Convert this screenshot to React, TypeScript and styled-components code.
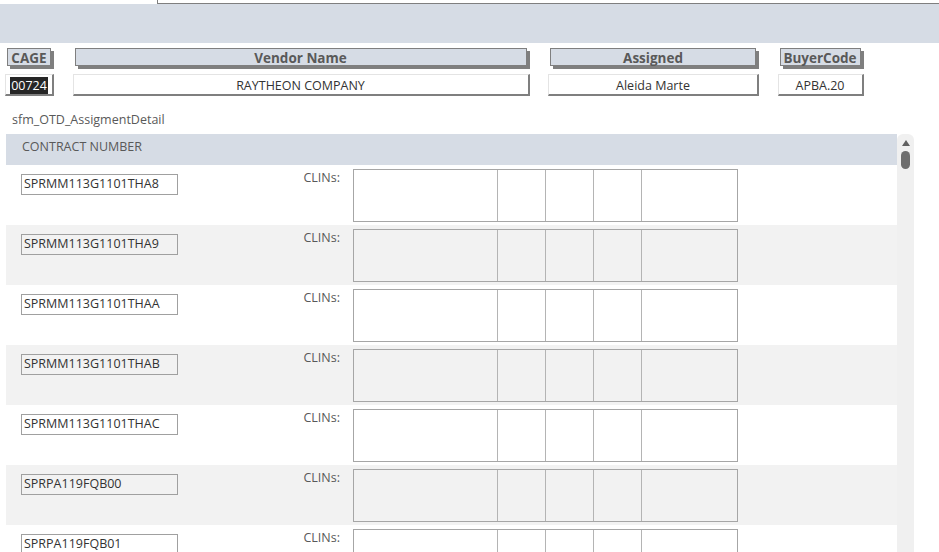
import styled, { createGlobalStyle } from 'styled-components';

const GlobalStyle = createGlobalStyle`
  html, body {
    margin: 0;
    padding: 0;
    background: #ffffff;
    overflow: hidden;
  }
  body {
    font-family: "Open Sans", "Liberation Sans", sans-serif;
  }
  * {
    box-sizing: border-box;
  }
`;

const Page = styled.div`
  width: 939px;
  height: 552px;
  overflow: hidden;
  background: #ffffff;
`;

const TabStrip = styled.div`
  height: 4px;
  padding-left: 157px;
`;

const TabEdge = styled.div`
  height: 4px;
  border-left: 1px solid #7f7f7f;
  border-bottom: 1px solid #7f7f7f;
`;

const Band = styled.div`
  height: 39px;
  background: #d6dce5;
`;

const HeaderGrid = styled.div`
  display: grid;
  grid-template-columns: 49px 457px 211px 86px;
  column-gap: 18.5px;
  row-gap: 8px;
  margin: 5px 0 0 5px;
`;

const FieldLabel = styled.div`
  height: 18px;
  margin: 0 3px 0 2px;
  background: #d6dce5;
  border: 1px solid #7f7f7f;
  box-shadow: 3px 3px 0 #7f7f7f;
  color: #595959;
  font-size: 13.5px;
  font-weight: 700;
  line-height: 18px;
  text-align: center;
  white-space: nowrap;
`;

const FieldValue = styled.div`
  height: 22px;
  background: #ffffff;
  border-top: 1px solid #e4e4e4;
  border-left: 1px solid #e4e4e4;
  border-right: 2px solid #7f7f7f;
  border-bottom: 2px solid #7f7f7f;
  color: #333333;
  font-size: 12.5px;
  line-height: 21px;
  text-align: center;
  white-space: nowrap;
`;

const Selected = styled.span`
  background: #262626;
  color: #ffffff;
  padding: 0 1px;
`;

const FormTitle = styled.div`
  margin: 16px 0 0 12px;
  height: 22px;
  color: #595959;
  font-size: 12.5px;
  line-height: 16px;
`;

const SubForm = styled.div`
  display: flex;
  margin-left: 6px;
  width: 908px;
  height: 420px;
  overflow: hidden;
`;

const List = styled.div`
  width: 891px;
`;

const ListHeader = styled.div`
  height: 31px;
  background: #d6dce5;
  padding-left: 16px;
  color: #595959;
  font-size: 12.5px;
  line-height: 25px;
`;

const Row = styled.div<{ $alt: boolean }>`
  display: flex;
  align-items: flex-start;
  height: 60px;
  background: ${(p) => (p.$alt ? '#f2f2f2' : '#ffffff')};
`;

const ContractBox = styled.div`
  width: 157px;
  height: 21px;
  margin: 9px 0 0 15px;
  padding-left: 2px;
  border: 1px solid #a0a0a0;
  color: #333333;
  font-size: 12.5px;
  line-height: 18px;
  white-space: nowrap;
`;

const ClinLabel = styled.div`
  width: 162px;
  margin: 5px 13px 0 0;
  text-align: right;
  color: #595959;
  font-size: 12.5px;
  line-height: 16px;
`;

const ClinGrid = styled.div`
  display: grid;
  grid-template-columns: 143px 48px 48px 48px 1fr;
  width: 385px;
  height: 53px;
  margin-top: 4px;
  border: 1px solid #a6a6a6;
`;

const ClinCell = styled.div`
  & + & {
    border-left: 1px solid #b4b4b4;
  }
`;

const ScrollBar = styled.div`
  width: 17px;
  background: #f0f0f0;
  border-radius: 6px 6px 0 0;
  display: flex;
  flex-direction: column;
  align-items: center;
  padding-top: 6px;
`;

const UpArrow = styled.div`
  width: 0;
  height: 0;
  border-left: 4px solid transparent;
  border-right: 4px solid transparent;
  border-bottom: 6px solid #606060;
`;

const Thumb = styled.div`
  width: 9px;
  height: 18px;
  margin-top: 5px;
  border-radius: 5px;
  background: #6e6e6e;
`;

const contracts = [
  'SPRMM113G1101THA8',
  'SPRMM113G1101THA9',
  'SPRMM113G1101THAA',
  'SPRMM113G1101THAB',
  'SPRMM113G1101THAC',
  'SPRPA119FQB00',
  'SPRPA119FQB01',
  'SPRPA119FQB02',
];

function App() {
  return (
    <Page>
      <GlobalStyle />
      <TabStrip>
        <TabEdge />
      </TabStrip>
      <Band />
      <HeaderGrid>
        <FieldLabel>CAGE</FieldLabel>
        <FieldLabel>Vendor Name</FieldLabel>
        <FieldLabel>Assigned</FieldLabel>
        <FieldLabel>BuyerCode</FieldLabel>
        <FieldValue>
          <Selected>00724</Selected>
        </FieldValue>
        <FieldValue>RAYTHEON COMPANY</FieldValue>
        <FieldValue>Aleida Marte</FieldValue>
        <FieldValue>APBA.20</FieldValue>
      </HeaderGrid>
      <FormTitle>sfm_OTD_AssigmentDetail</FormTitle>
      <SubForm>
        <List>
          <ListHeader>CONTRACT NUMBER</ListHeader>
          {contracts.map((c, i) => (
            <Row key={c} $alt={i % 2 === 1}>
              <ContractBox>{c}</ContractBox>
              <ClinLabel>CLINs:</ClinLabel>
              <ClinGrid>
                <ClinCell />
                <ClinCell />
                <ClinCell />
                <ClinCell />
                <ClinCell />
              </ClinGrid>
            </Row>
          ))}
        </List>
        <ScrollBar>
          <UpArrow />
          <Thumb />
        </ScrollBar>
      </SubForm>
    </Page>
  );
}

export default App;
